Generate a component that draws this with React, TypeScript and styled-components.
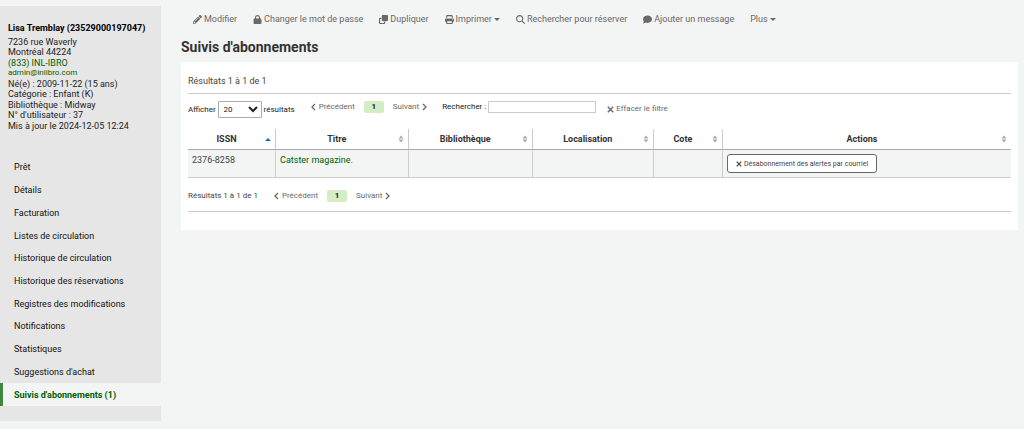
import React from "react";
import styled, { createGlobalStyle, css } from "styled-components";
import {
  FaLock,
  FaClone,
  FaPrint,
  FaMagnifyingGlass,
  FaComment,
} from "react-icons/fa6";
import { FaPencilAlt } from "react-icons/fa";

const GlobalStyle = createGlobalStyle`
  * { box-sizing: border-box; }
  body {
    margin: 0;
    background: #f3f4f4;
    color: #222;
    font-family: Roboto, "Liberation Sans", sans-serif;
    font-size: 9px;
    line-height: 12px;
  }
  a { text-decoration: none; }
`;

const Page = styled.div`
  display: flex;
  align-items: flex-start;
  padding-top: 6px;
`;

const Sidebar = styled.aside`
  flex: 0 0 161px;
  background: #e6e6e6;
  padding: 16px 0 15px;
`;

const Patron = styled.section`
  padding: 0 8px;
`;

const PatronName = styled.h5`
  margin: 0 0 2px;
  font-size: 9px;
  line-height: 13px;
  font-weight: 700;
  color: #000;
  white-space: nowrap;
`;

const PatronList = styled.ul`
  display: grid;
  grid-auto-rows: 1fr;
  min-height: 94px;
  list-style: none;
  margin: 0;
  padding: 0;
  font-size: 9px;
  line-height: 10px;
`;

const PatronLine = styled.li<{ $small?: boolean }>`
  ${(p) => p.$small && css`font-size: 8px;`}
`;

const GreenLink = styled.a`
  color: #006100;
`;

const Menu = styled.ul`
  display: grid;
  grid-auto-rows: 1fr;
  min-height: 250px;
  list-style: none;
  margin: 25px 0 0;
  padding: 0;
`;

const MenuItem = styled.li`
  display: grid;
`;

const MenuLink = styled.a<{ $active?: boolean }>`
  display: flex;
  align-items: center;
  padding: 4px 8px 4px 11px;
  border-left: 3px solid transparent;
  color: #111;
  ${(p) =>
    p.$active &&
    css`
      background: #f3f4f4;
      border-color: #408540;
      color: #006100;
      font-weight: 700;
    `}
`;

const Main = styled.main`
  flex: 1;
  min-width: 0;
  padding: 4px 6px 0 20px;
`;

const Toolbar = styled.div`
  display: flex;
  gap: 16px;
  padding: 0 12px;
`;

const ToolButton = styled.button`
  display: inline-flex;
  align-items: center;
  gap: 2px;
  padding: 0;
  border: 0;
  background: none;
  color: #696969;
  font: inherit;
  line-height: 18px;
  white-space: nowrap;
`;

const Caret = styled.span`
  border: 3px solid transparent;
  border-top-color: currentColor;
  border-bottom: 0;
`;

const Title = styled.h1`
  margin: 11px 0 7px;
  font-size: 14px;
  line-height: 16px;
  font-weight: 700;
  color: #333;
`;

const Panel = styled.section`
  background: #fff;
  padding: 11px 7px 18px 7px;
`;

const Summary = styled.div`
  padding-bottom: 4px;
  border-bottom: 1px solid #ccc;
  line-height: 16px;
  color: #444;
`;

const Controls = styled.div`
  display: flex;
  align-items: flex-start;
  height: 35px;
  padding-top: 7px;
  font-size: 8px;
`;

const LengthLabel = styled.label`
  display: flex;
  align-items: center;
  gap: 2px;
  color: #222;
`;

const LengthSelect = styled.select`
  width: 44px;
  height: 17px;
  padding: 0 0 0 1px;
  border: 1px solid #aaa;
  border-radius: 1px;
  background: #fff;
  color: #222;
  font: inherit;
`;

const Pager = styled.nav`
  display: flex;
  align-items: center;
  gap: 9px;
  margin-left: 16px;
  font-size: 8px;
`;

const PageStep = styled.button`
  display: inline-flex;
  align-items: center;
  gap: 3px;
  padding: 0;
  border: 0;
  background: none;
  color: #696969;
  font: inherit;
`;

const PageNumber = styled.button`
  width: 20px;
  height: 12px;
  padding: 0;
  border: 0;
  border-radius: 2px;
  background: #d4edc4;
  color: #222;
  font: inherit;
  line-height: 12px;
  font-weight: 700;
`;

const FilterLabel = styled.label`
  display: flex;
  align-items: center;
  gap: 2px;
  margin-left: 15px;
  color: #222;
`;

const FilterInput = styled.input`
  width: 108px;
  height: 12px;
  padding: 0 2px;
  border: 1px solid #ccc;
  font: inherit;
`;

const ClearButton = styled(PageStep)`
  gap: 2px;
  margin: 2px 0 0 11px;
`;

const DataTable = styled.table`
  width: 100%;
  table-layout: fixed;
  border-collapse: separate;
  border-spacing: 0;
`;

const Column = styled.col<{ $width?: number }>`
  width: ${(p) => (p.$width ? `${p.$width}%` : "auto")};
`;

const HeadCell = styled.th`
  padding: 0 4px 0 0;
  height: 21px;
  border-right: 1px solid #ccc;
  border-bottom: 1px solid #aaa;
  color: #333;
  &:last-child { border-right: 0; }
`;

const HeadContent = styled.div`
  display: flex;
  align-items: center;
`;

const HeadText = styled.span`
  flex: 1;
  text-align: center;
`;

const Cell = styled.td`
  height: 28px;
  padding: 4px;
  vertical-align: top;
  border-right: 1px solid #ccc;
  border-bottom: 1px solid #ccc;
  background: #f3f4f4;
  color: #444;
  &:last-child { border-right: 0; }
`;

const RowButton = styled.button`
  display: inline-flex;
  align-items: center;
  justify-content: center;
  gap: 2px;
  height: 19px;
  padding: 0 8px;
  border: 1px solid #666;
  border-radius: 3px;
  background: #fff;
  color: #444;
  font: inherit;
  font-size: 7px;
  white-space: nowrap;
`;

const BottomBar = styled.div`
  display: flex;
  align-items: flex-start;
  padding: 12px 0 9px;
  border-bottom: 1px solid #ccc;
  font-size: 8px;
  color: #444;
`;

const patronMenu = [
  "Prêt",
  "Détails",
  "Facturation",
  "Listes de circulation",
  "Historique de circulation",
  "Historique des réservations",
  "Registres des modifications",
  "Notifications",
  "Statistiques",
  "Suggestions d'achat",
  "Suivis d'abonnements (1)",
];

const columns = [
  { label: "ISSN", width: 10.7 },
  { label: "Titre", width: 16.1 },
  { label: "Bibliothèque", width: 15.1 },
  { label: "Localisation", width: 14.7 },
  { label: "Cote", width: 8.4 },
  { label: "Actions" },
];

function SortIcon({ ascending }: { ascending?: boolean }) {
  return (
    <svg width="6" height="8" viewBox="0 0 6 8" aria-hidden="true">
      {ascending ? (
        <path d="M0 6 L3 3 L6 6 Z" fill="#0d6dcd" />
      ) : (
        <path d="M0.5 3.4 L3 0.4 L5.5 3.4 Z M0.5 4.6 L3 7.6 L5.5 4.6 Z" fill="#aaa" />
      )}
    </svg>
  );
}

function Chevron({ next }: { next?: boolean }) {
  return (
    <svg width="5" height="8" viewBox="0 0 5 8" fill="none" stroke="currentColor" strokeWidth="1.3" aria-hidden="true">
      <path d={next ? "M1 1 L4 4 L1 7" : "M4 1 L1 4 L4 7"} />
    </svg>
  );
}

function Cross({ size }: { size: number }) {
  return (
    <svg width={size} height={size} viewBox="0 0 7 7" stroke="currentColor" strokeWidth="1.4" aria-hidden="true">
      <path d="M0.8 0.8 L6.2 6.2 M6.2 0.8 L0.8 6.2" />
    </svg>
  );
}

function Pagination() {
  return (
    <Pager aria-label="Pagination">
      <PageStep><Chevron />Précédent</PageStep>
      <PageNumber>1</PageNumber>
      <PageStep>Suivant<Chevron next /></PageStep>
    </Pager>
  );
}

export default function App() {
  return (
    <>
      <GlobalStyle />
      <Page>
        <Sidebar>
          <Patron>
            <PatronName>Lisa Tremblay (23529000197047)</PatronName>
            <PatronList>
              <PatronLine>7236 rue Waverly</PatronLine>
              <PatronLine>Montréal 44224</PatronLine>
              <PatronLine><GreenLink href="#tel">(833) INL-IBRO</GreenLink></PatronLine>
              <PatronLine $small><GreenLink href="#mail">admin@inlibro.com</GreenLink></PatronLine>
              <PatronLine>Né(e) : 2009-11-22 (15 ans)</PatronLine>
              <PatronLine>Catégorie : Enfant (K)</PatronLine>
              <PatronLine>Bibliothèque : Midway</PatronLine>
              <PatronLine>N° d'utilisateur : 37</PatronLine>
              <PatronLine>Mis à jour le 2024-12-05 12:24</PatronLine>
            </PatronList>
          </Patron>
          <Menu>
            {patronMenu.map((label, i) => (
              <MenuItem key={label}>
                <MenuLink href="#menu" $active={i === patronMenu.length - 1}>{label}</MenuLink>
              </MenuItem>
            ))}
          </Menu>
        </Sidebar>
        <Main>
          <Toolbar>
            <ToolButton><FaPencilAlt size={9} />Modifier</ToolButton>
            <ToolButton><FaLock size={9} />Changer le mot de passe</ToolButton>
            <ToolButton><FaClone size={9} />Dupliquer</ToolButton>
            <ToolButton><FaPrint size={9} />Imprimer<Caret /></ToolButton>
            <ToolButton><FaMagnifyingGlass size={9} />Rechercher pour réserver</ToolButton>
            <ToolButton><FaComment size={9} />Ajouter un message</ToolButton>
            <ToolButton>Plus<Caret /></ToolButton>
          </Toolbar>
          <Title>Suivis d'abonnements</Title>
          <Panel>
            <Summary>Résultats 1 à 1 de 1</Summary>
            <Controls>
              <LengthLabel>
                Afficher
                <LengthSelect defaultValue="20">
                  <option>20</option>
                  <option>50</option>
                  <option>100</option>
                </LengthSelect>
                résultats
              </LengthLabel>
              <Pagination />
              <FilterLabel>Rechercher :<FilterInput type="search" /></FilterLabel>
              <ClearButton><Cross size={7} />Effacer le filtre</ClearButton>
            </Controls>
            <DataTable>
              <colgroup>
                {columns.map((c) => <Column key={c.label} $width={c.width} />)}
              </colgroup>
              <thead>
                <tr>
                  {columns.map((c, i) => (
                    <HeadCell key={c.label} scope="col">
                      <HeadContent>
                        <HeadText>{c.label}</HeadText>
                        <SortIcon ascending={i === 0} />
                      </HeadContent>
                    </HeadCell>
                  ))}
                </tr>
              </thead>
              <tbody>
                <tr>
                  <Cell>2376-8258</Cell>
                  <Cell><GreenLink href="#titre">Catster magazine.</GreenLink></Cell>
                  <Cell />
                  <Cell />
                  <Cell />
                  <Cell>
                    <RowButton><Cross size={6} />Désabonnement des alertes par courriel</RowButton>
                  </Cell>
                </tr>
              </tbody>
            </DataTable>
            <BottomBar>
              <span>Résultats 1 à 1 de 1</span>
              <Pagination />
            </BottomBar>
          </Panel>
        </Main>
      </Page>
    </>
  );
}
